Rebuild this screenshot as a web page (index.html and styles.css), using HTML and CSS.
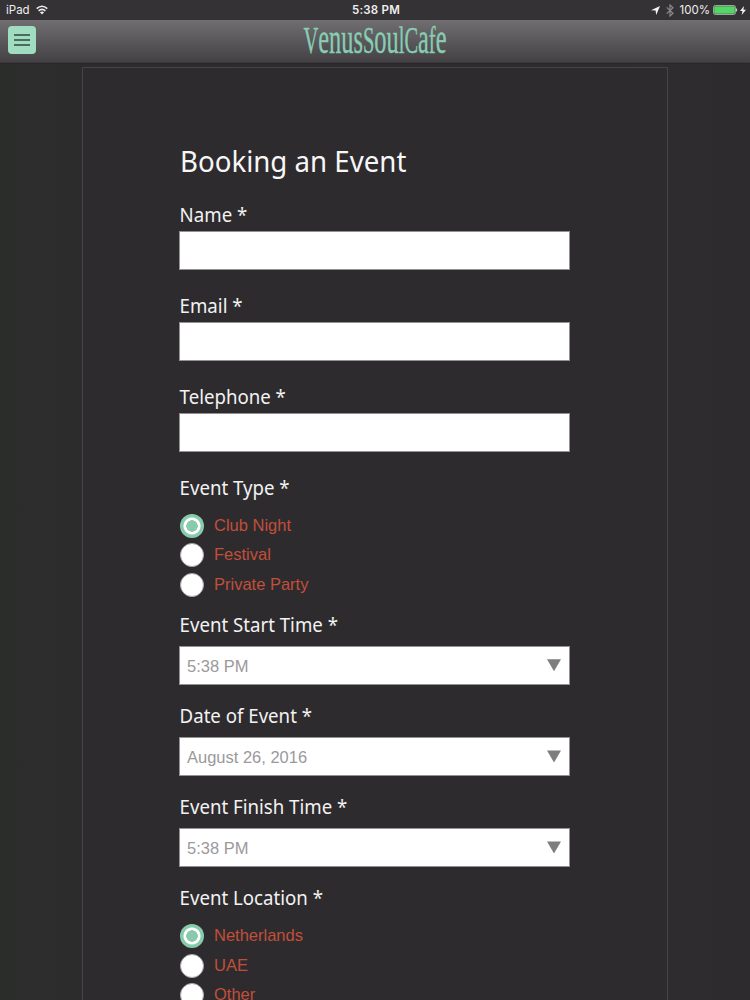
FILE: index.html
```html
<!DOCTYPE html>
<html lang="en">
<head>
<meta charset="utf-8">
<title>VenusSoulCafe</title>
<link rel="stylesheet" href="styles.css">
</head>
<body>
<div class="status">
  <div class="status-left"><span class="device">iPad</span>
    <svg class="wifi" width="12" height="10" viewBox="0 0 12 10" fill="none" stroke="#eee" stroke-width="1.6"><path d="M.7 3.7Q6-1.2 11.3 3.7M2.6 5.9Q6 2.8 9.4 5.9"/><path d="M6 9.4L3.9 7.2Q6 5.6 8.1 7.2Z" fill="#eee" stroke="none"/></svg>
  </div>
  <div class="clock">5:38 PM</div>
  <div class="status-right">
    <svg class="location" width="9" height="9" viewBox="0 0 9 9"><path d="M9 0L5.2 9 4.6 4.6 0 4.2Z" fill="#f4f4f4"/></svg>
    <svg class="bluetooth" width="8" height="13" viewBox="0 0 8 13" fill="none" stroke="#8b898c" stroke-width="1.2"><path d="M.7 3.4L7 9.2 4 12V1L7 3.8.7 9.6"/></svg>
    <span class="percent">100%</span>
    <svg class="battery" width="25" height="10" viewBox="0 0 25 10"><rect x=".5" y=".5" width="22" height="9" rx="1.8" fill="#2f2d2f" stroke="#b5c8b5" stroke-width=".8"/><rect x="1.2" y="1.2" width="20.6" height="7.6" rx="1" fill="#55d567"/><path d="M23.2 3Q25.2 5 23.2 7Z" fill="#eee"/></svg>
    <svg class="bolt" width="6" height="9" viewBox="0 0 6 9"><path d="M4 0L0 5H2.5L1.7 9 6 3.7H3.4Z" fill="#f4f4f4"/></svg>
  </div>
</div>
<header class="topbar">
  <button class="menu" aria-label="Menu"><span></span><span></span><span></span></button>
  <svg class="logo" width="152" height="56" viewBox="0 0 152 56"><text x="4.5" y="42" textLength="143" lengthAdjust="spacingAndGlyphs"><tspan>V</tspan><tspan class="low">enus</tspan><tspan>S</tspan><tspan class="low">ou</tspan><tspan>lC</tspan><tspan class="low">a</tspan><tspan>f</tspan><tspan class="low">e</tspan></text></svg>
</header>
<main class="panel">
  <h1 class="title">Booking an Event</h1>
  <div class="field"><label class="label">Name *</label><div class="input"></div></div>
  <div class="field"><label class="label">Email *</label><div class="input"></div></div>
  <div class="field"><label class="label">Telephone *</label><div class="input"></div></div>
  <div class="field choices"><label class="label">Event Type *</label>
    <div class="options">
      <div class="option"><i class="radio checked"></i><span>Club Night</span></div>
      <div class="option"><i class="radio"></i><span>Festival</span></div>
      <div class="option"><i class="radio"></i><span>Private Party</span></div>
    </div>
  </div>
  <div class="field"><label class="label">Event Start Time *</label><div class="input select"><span>5:38 PM</span><i class="arrow"></i></div></div>
  <div class="field"><label class="label">Date of Event *</label><div class="input select"><span>August 26, 2016</span><i class="arrow"></i></div></div>
  <div class="field"><label class="label">Event Finish Time *</label><div class="input select"><span>5:38 PM</span><i class="arrow"></i></div></div>
  <div class="field choices"><label class="label">Event Location *</label>
    <div class="options">
      <div class="option"><i class="radio checked"></i><span>Netherlands</span></div>
      <div class="option"><i class="radio"></i><span>UAE</span></div>
      <div class="option"><i class="radio"></i><span>Other</span></div>
    </div>
  </div>
</main>
</body>
</html>
```
FILE: styles.css
```css
* { box-sizing: border-box; }
body {
  margin: 0;
  width: 750px;
  height: 1000px;
  overflow: hidden;
  display: flex;
  flex-direction: column;
  background: linear-gradient(90deg, #2b2d2b 0, #2d2c2d 90px, #2e2c2e 660px, #2d2b2e 100%);
  font-family: "Liberation Sans", sans-serif;
}
.status {
  flex: none;
  height: 20px;
  padding: 0 4px 0 6px;
  display: grid;
  grid-template-columns: 1fr auto 1fr;
  align-items: center;
  background: #343235;
  color: #eee;
  font: 11.5px/20px Inter, sans-serif;
}
.status-left, .status-right { display: flex; align-items: center; }
.status-left { gap: 6px; }
.status-right { justify-content: flex-end; }
.clock { font-weight: 600; letter-spacing: .2px; }
.location { margin-right: 6px; }
.bluetooth { margin-right: 6px; }
.percent { margin-right: 3px; }
.battery { margin-right: 2px; }
.topbar {
  flex: none;
  height: 44px;
  padding-left: 8px;
  display: grid;
  grid-template-columns: 1fr auto 1fr;
  background: linear-gradient(#706e70, #434144 96%, #29272a 98%);
}
.menu {
  width: 28px;
  height: 28px;
  margin: 6px 0 0;
  padding: 0 6px;
  border: 0;
  border-radius: 4px;
  background: #a0dcc0;
  display: flex;
  flex-direction: column;
  justify-content: center;
  gap: 3px;
}
.menu span { height: 2px; background: #4d6a5d; }
.logo { margin: -9px 8px 0 0; }
.logo text {
  font-family: "Liberation Serif", serif;
  font-size: 37px;
  fill: #88cdb4;
  stroke: #88cdb4;
  stroke-width: .4;
}
.logo .low { font-size: 44px; }
.panel {
  flex: none;
  width: 586px;
  height: 960px;
  margin: 3px 0 0 82px;
  padding: 72px 97px 0 96px;
  border: 1px solid #464447;
  background: #2e2b2e;
}
.title {
  margin: 0 0 0 1px;
  height: 58px;
  font: 400 29px/42px "Noto Sans", sans-serif;
  color: #f7f7f7;
  white-space: nowrap;
  transform: scaleX(.953);
  transform-origin: left;
}
.field { height: 91.1px; width: 391px; }
.choices { height: 137px; }
.label {
  display: block;
  height: 33px;
  padding: 5.5px 0 0 .6px;
  font: 19px/22px "Noto Sans", sans-serif;
  color: #f2f2f2;
  transform: scaleX(.981);
  transform-origin: left;
}
.input {
  height: 39px;
  border: 1px solid #939193;
  background: #fff;
}
.select {
  margin-top: 5px;
  display: flex;
  align-items: center;
  justify-content: space-between;
  padding: 2px 8px 0 7px;
  font-size: 17px;
  color: #9b999b;
}
.select span, .option span {
  transform: scaleX(.97);
  transform-origin: left;
}
.arrow {
  width: 14px;
  height: 12px;
  margin-top: -3px;
  background: #7e7e7e;
  clip-path: polygon(0 0, 100% 0, 50% 100%);
}
.options { padding: 7px 0 0 .7px; }
.option {
  height: 29.3px;
  display: flex;
  align-items: center;
  gap: 10px;
  font-size: 17px;
  color: #c14f3a;
}
.radio {
  width: 24px;
  height: 24px;
  border: 1.5px solid #aaa8aa;
  border-radius: 50%;
  background: #fff;
}
.checked {
  border: 0;
  background: radial-gradient(circle, #88cbac 5.5px, #fff 6px, #fff 8px, #88cbac 9px);
}
```
